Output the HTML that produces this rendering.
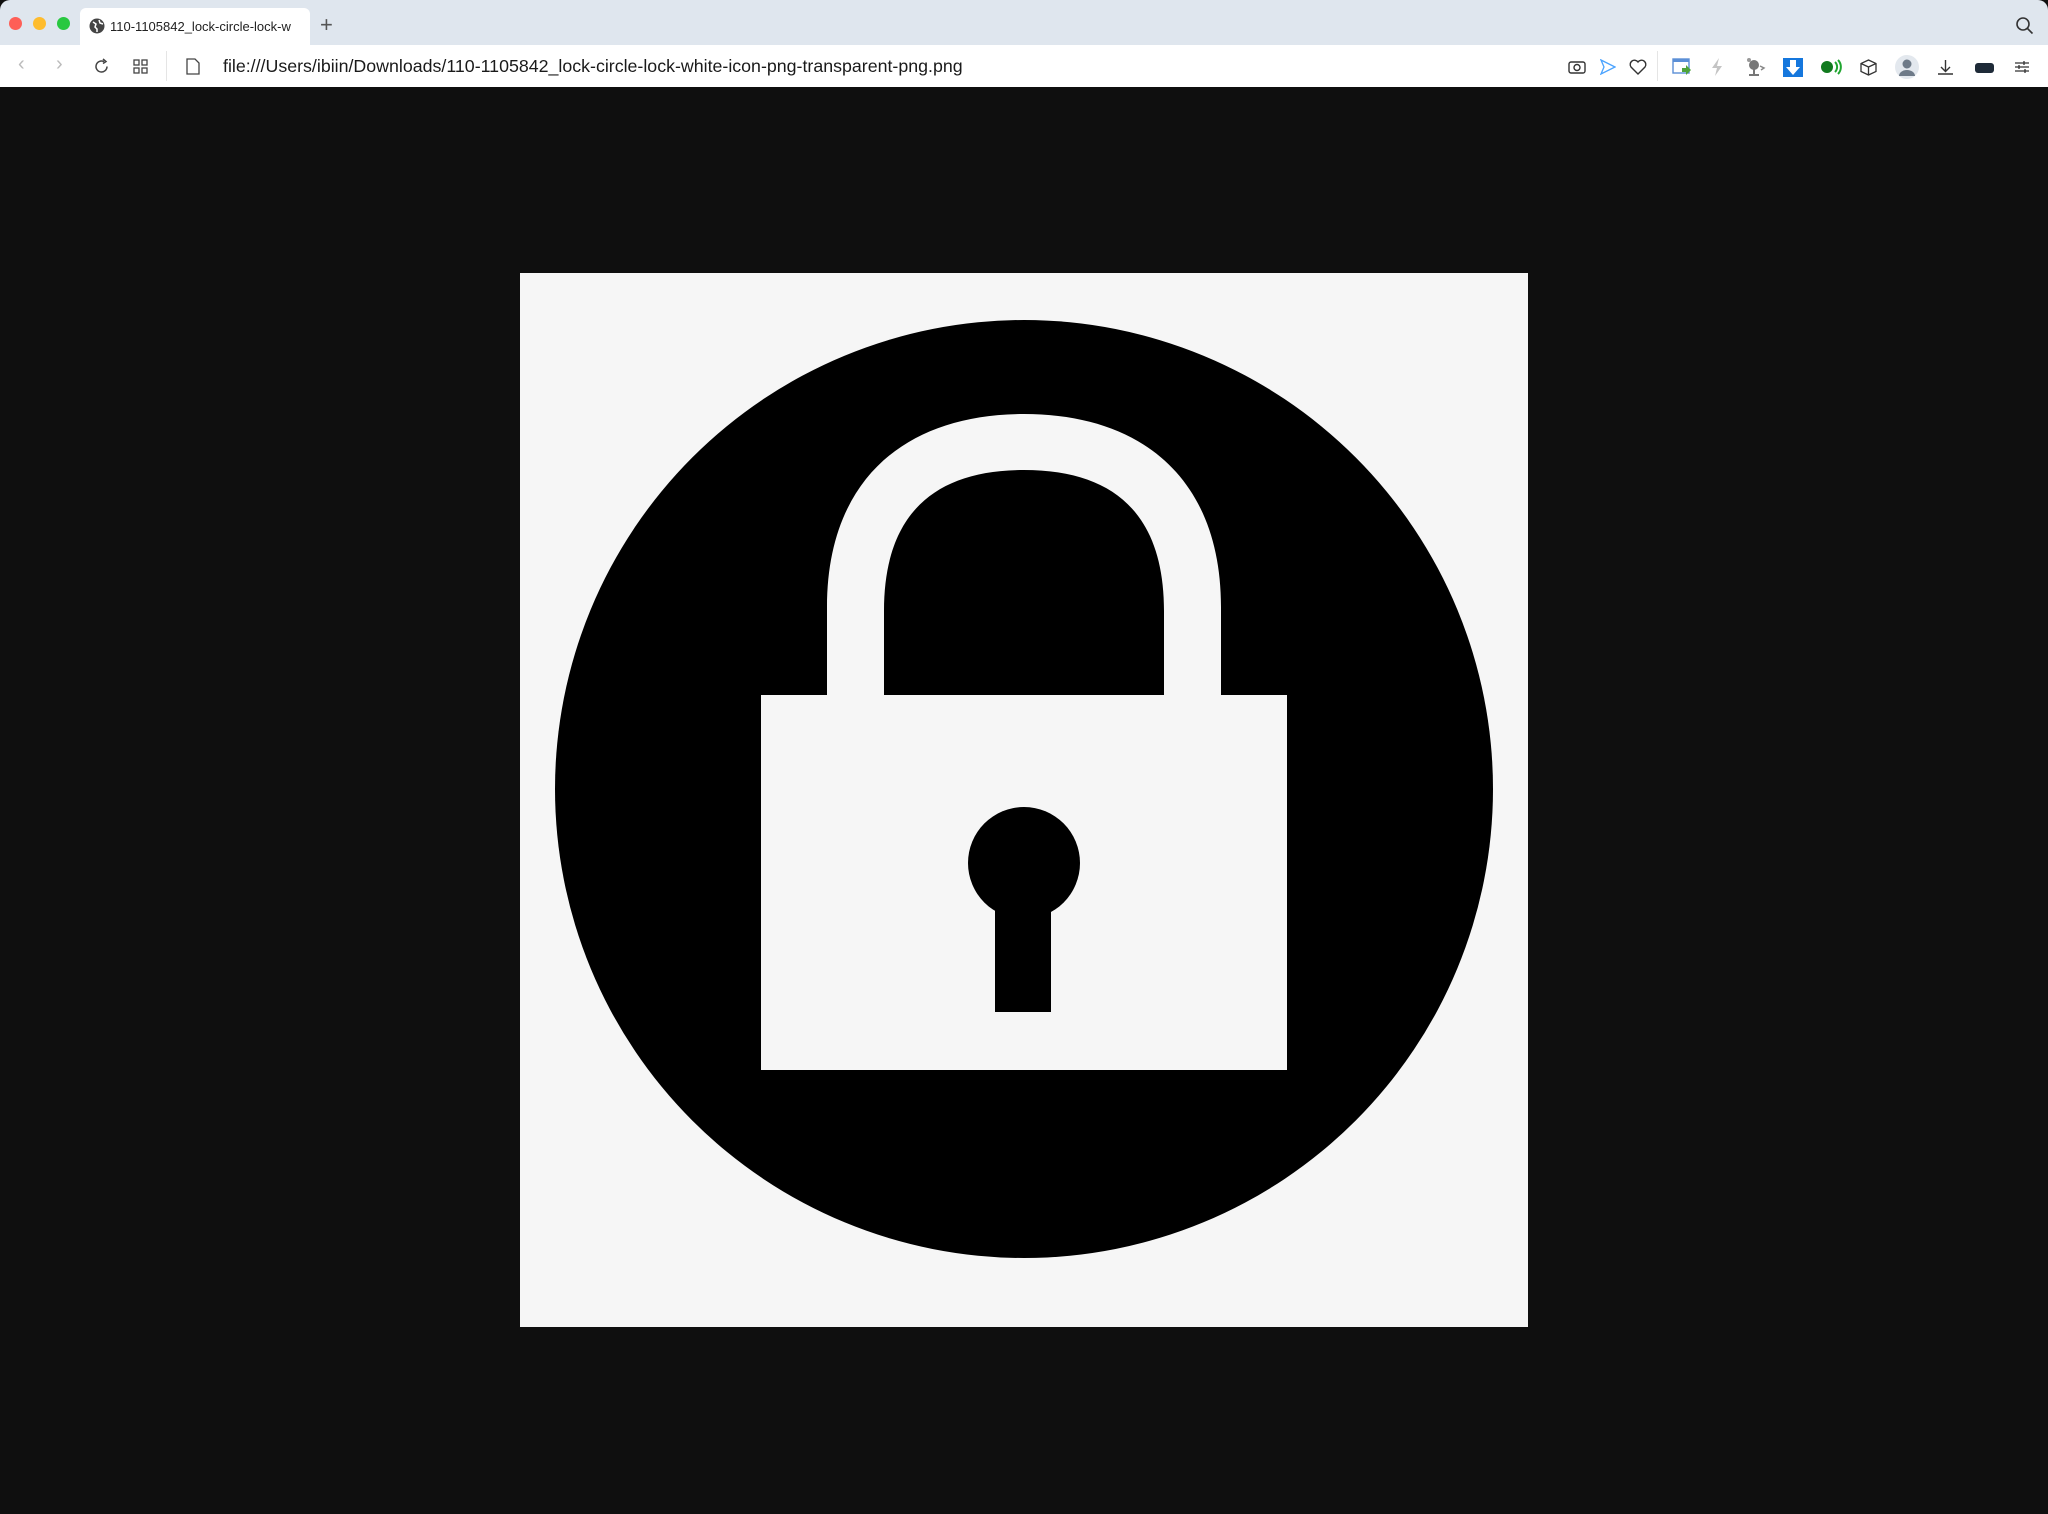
<!DOCTYPE html>
<html><head><meta charset="utf-8"><style>
*{margin:0;padding:0;box-sizing:border-box}
body{width:2048px;height:1514px;background:#0f0f0f;position:relative;overflow:hidden;font-family:"Liberation Sans",sans-serif}
.tabbar{position:absolute;left:0;top:0;width:2048px;height:45px;background:#dfe6ee;border-radius:10px 10px 0 0}
.tab{position:absolute;left:80px;top:8px;width:230px;height:37px;background:#fff;border-radius:6px 6px 0 0;font-size:13px;color:#222;padding:11px 0 0 30px;white-space:nowrap;overflow:hidden}
.dot{position:absolute;top:17px;width:13px;height:13px;border-radius:50%}
.toolbar{position:absolute;left:0;top:45px;width:2048px;height:42px;background:#fff}
.url{position:absolute;left:223px;top:11px;font-size:17.8px;color:#1a1a1a}
svg.i{position:absolute}
</style></head><body>
<div class="tabbar">
<div class="dot" style="left:9px;background:#fe5f57"></div>
<div class="dot" style="left:33px;background:#febc2e"></div>
<div class="dot" style="left:57px;background:#28c840"></div>
<div class="tab"><svg style="position:absolute;left:9px;top:10px" width="16" height="16" viewBox="0 0 16 16"><circle cx="8" cy="8" r="7.5" fill="#444"/><path d="M4 4l3 2-1 3 2 2v3M10 2l1 3 3 1" stroke="#fff" stroke-width="1.5" fill="none"/></svg>110-1105842_lock-circle-lock-w</div>
<div style="position:absolute;left:320px;top:12px;font-size:22px;color:#555">+</div>
<svg class="i" style="left:2015px;top:16px" width="20" height="20" viewBox="0 0 20 20"><circle cx="8" cy="8" r="6" stroke="#333" stroke-width="1.6" fill="none"/><path d="M12.5 12.5l5 5" stroke="#333" stroke-width="1.6"/></svg>
</div>
<div class="toolbar">
<div style="position:absolute;left:18px;top:8px;font-size:20px;color:#bbb">‹</div>
<div style="position:absolute;left:56px;top:8px;font-size:20px;color:#bbb">›</div>
<svg class="i" style="left:93px;top:13px" width="17" height="17" viewBox="0 0 17 17"><path d="M14 8.5A5.5 5.5 0 1 1 11 3.6" stroke="#444" stroke-width="1.5" fill="none"/><path d="M10 1l3 2.5-3 2" stroke="#444" stroke-width="1.5" fill="none"/></svg>
<svg class="i" style="left:133px;top:14px" width="15" height="15" viewBox="0 0 15 15"><g stroke="#444" stroke-width="1.3" fill="none"><rect x="1" y="1" width="5" height="5"/><rect x="9" y="1" width="5" height="5"/><rect x="1" y="9" width="5" height="5"/><rect x="9" y="9" width="5" height="5"/></g></svg>
<div style="position:absolute;left:166px;top:6px;width:1px;height:30px;background:#e5e5e5"></div>
<svg class="i" style="left:186px;top:13px" width="14" height="17" viewBox="0 0 14 17"><path d="M1 1h8l4 4v11H1z" stroke="#444" stroke-width="1.3" fill="none"/></svg>
<div class="url">file:///Users/ibiin/Downloads/110-1105842_lock-circle-lock-white-icon-png-transparent-png.png</div>
<svg class="i" style="left:1568px;top:14px" width="18" height="16" viewBox="0 0 18 16"><rect x="1" y="3" width="16" height="11" rx="2" stroke="#333" stroke-width="1.4" fill="none"/><circle cx="9" cy="8.5" r="3" stroke="#333" stroke-width="1.4" fill="none"/></svg>
<svg class="i" style="left:1600px;top:14px" width="16" height="16" viewBox="0 0 16 16"><path d="M1 1l14 7-14 7 3-7z" stroke="#4aa3ff" stroke-width="1.3" fill="none"/></svg>
<svg class="i" style="left:1629px;top:14px" width="18" height="16" viewBox="0 0 18 16"><path d="M9 15L2 8a4 4 0 0 1 7-5 4 4 0 0 1 7 5z" stroke="#333" stroke-width="1.4" fill="none"/></svg>
<div style="position:absolute;left:1657px;top:6px;width:1px;height:30px;background:#e5e5e5"></div>
<svg class="i" style="left:1672px;top:13px" width="20" height="19" viewBox="0 0 20 19"><rect x="1" y="1" width="16" height="14" fill="#fff" stroke="#5b8fd6" stroke-width="1.4"/><rect x="1" y="1" width="16" height="3" fill="#5b8fd6"/><path d="M10 10h4V7l5 5-5 5v-3h-4z" fill="#4ea33a"/></svg>
<svg class="i" style="left:1710px;top:13px" width="14" height="18" viewBox="0 0 14 18"><path d="M9 0L2 10h5l-2 8 7-10H7z" fill="#c4c4c4"/></svg>
<svg class="i" style="left:1745px;top:12px" width="22" height="20" viewBox="0 0 22 20"><circle cx="9" cy="8" r="5" fill="#777"/><path d="M9 12v6M4 18h10" stroke="#777" stroke-width="2"/><circle cx="4" cy="3" r="2" fill="#999"/><path d="M15 9l4 2-3 2" stroke="#888" stroke-width="1.5" fill="none"/></svg>
<svg class="i" style="left:1783px;top:13px" width="20" height="19" viewBox="0 0 20 19"><rect width="20" height="19" fill="#1577dd"/><path d="M7 2h6v7h4l-7 8-7-8h4z" fill="#fff"/></svg>
<svg class="i" style="left:1820px;top:14px" width="22" height="16" viewBox="0 0 22 16"><circle cx="7" cy="8" r="6" fill="#117a1e"/><path d="M15 3a7 7 0 0 1 0 10M18 1a10 10 0 0 1 0 14" stroke="#1fa52f" stroke-width="2" fill="none"/></svg>
<svg class="i" style="left:1860px;top:14px" width="17" height="17" viewBox="0 0 17 17"><path d="M8.5 1L16 4.5v8L8.5 16 1 12.5v-8zM1 4.5l7.5 3.5 7.5-3.5M8.5 8v8" stroke="#333" stroke-width="1.3" fill="none"/></svg>
<svg class="i" style="left:1895px;top:10px" width="24" height="24" viewBox="0 0 24 24"><circle cx="12" cy="12" r="12" fill="#e3e8ee"/><circle cx="12" cy="9" r="4.5" fill="#6e7a88"/><path d="M4 21a8 6 0 0 1 16 0z" fill="#6e7a88"/></svg>
<svg class="i" style="left:1937px;top:14px" width="17" height="17" viewBox="0 0 17 17"><path d="M8.5 1v11M4 8l4.5 4.5L13 8M1 15h15" stroke="#333" stroke-width="1.4" fill="none"/></svg>
<div style="position:absolute;left:1975px;top:18px;width:19px;height:10px;border-radius:3px;background:#1e2a38"></div>
<svg class="i" style="left:2014px;top:14px" width="16" height="16" viewBox="0 0 16 16"><path d="M1 4h14M1 8h14M1 12h14" stroke="#333" stroke-width="1.3"/><path d="M10 2v4M5 6v4M11 10v4" stroke="#333" stroke-width="1.3"/></svg>
</div>
<svg style="position:absolute;left:520px;top:273px" width="1008" height="1054" viewBox="520 273 1008 1054">
<rect x="520" y="273" width="1008" height="1054" fill="#f6f6f6"/>
<ellipse cx="1024" cy="789" rx="469" ry="469" fill="#000"/>
<path d="M827 695V607C827 480 905 414 1024 414S1221 480 1221 607V695H1164V611C1164 515 1115 470 1024 470S884 515 884 611V695Z" fill="#f6f6f6"/>
<rect x="761" y="695" width="526" height="375" fill="#f6f6f6"/>
<circle cx="1024" cy="863" r="56" fill="#000"/>
<rect x="995" y="895" width="56" height="117" fill="#000"/>
</svg>
</body></html>
